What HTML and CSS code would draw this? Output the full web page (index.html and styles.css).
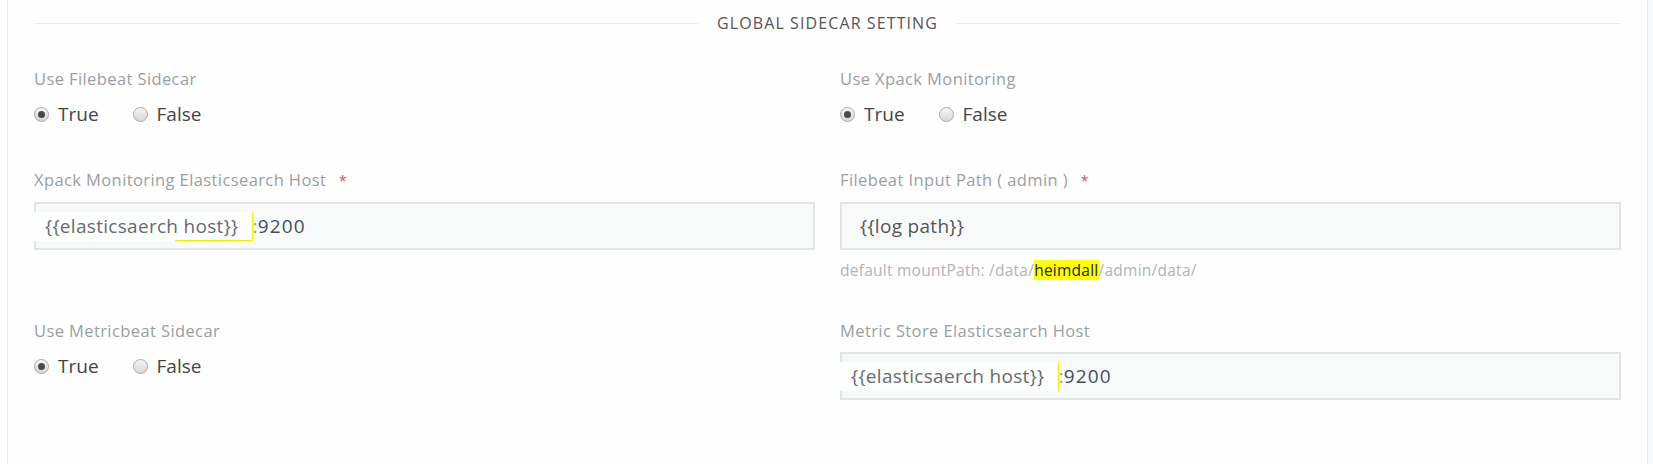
FILE: index.html
```html
<!DOCTYPE html>
<html lang="en">
<head>
<meta charset="utf-8">
<title>Global Sidecar Setting</title>
<link rel="stylesheet" href="styles.css">
</head>
<body>
<div class="page">
  <div class="card">
    <div class="section-title">
      <span class="line"></span>
      <span class="title-text">GLOBAL SIDECAR SETTING</span>
      <span class="line"></span>
    </div>
    <div class="grid">
      <div class="field">
        <div class="label">Use Filebeat Sidecar</div>
        <div class="radios">
          <label class="radio"><span class="dot checked"></span><span class="rtext">True</span></label>
          <label class="radio"><span class="dot"></span><span class="rtext">False</span></label>
        </div>
      </div>
      <div class="field">
        <div class="label">Use Xpack Monitoring</div>
        <div class="radios">
          <label class="radio"><span class="dot checked"></span><span class="rtext">True</span></label>
          <label class="radio"><span class="dot"></span><span class="rtext">False</span></label>
        </div>
      </div>

      <div class="field">
        <div class="label">Xpack Monitoring Elasticsearch Host <span class="req">*</span></div>
        <div class="input tag-input">
          <span class="tag underline">{{elasticsaerch host}}</span><span class="colon">:</span><span class="port">9200</span>
        </div>
      </div>
      <div class="field">
        <div class="label">Filebeat Input Path ( admin ) <span class="req">*</span></div>
        <div class="input plain-input">{{log path}}</div>
        <div class="help">default mountPath: /data/<mark class="hl">heimdall</mark>/admin/data/</div>
      </div>

      <div class="field row-last">
        <div class="label">Use Metricbeat Sidecar</div>
        <div class="radios">
          <label class="radio"><span class="dot checked"></span><span class="rtext">True</span></label>
          <label class="radio"><span class="dot"></span><span class="rtext">False</span></label>
        </div>
      </div>
      <div class="field row-last">
        <div class="label">Metric Store Elasticsearch Host</div>
        <div class="input tag-input">
          <span class="tag">{{elasticsaerch host}}</span><span class="colon">:</span><span class="port">9200</span>
        </div>
      </div>
    </div>
  </div>
  <div class="gutter"></div>
</div>
</body>
</html>
```

FILE: styles.css
```css
html, body {
  margin: 0;
  padding: 0;
  background: #ffffff;
}

body {
  font-family: "Open Sans", "Liberation Sans", sans-serif;
  color: #555;
}

.page {
  display: flex;
  height: 464px;
  padding-left: 7px;
  box-sizing: border-box;
  overflow: hidden;
}

.card {
  flex: 1;
  border-left: 1px solid #ececec;
  border-right: 1px solid #e8ecee;
  padding: 11px 26px 0 26px;
  box-sizing: border-box;
  background: #fefefe;
}

.gutter {
  width: 5px;
  background: #f6f8f9;
}

.section-title {
  display: flex;
  align-items: center;
  height: 24px;
}

.section-title .line {
  flex: 1;
  height: 1px;
  background: #ebebeb;
}

.title-text {
  padding: 0 19px;
  font-size: 16px;
  letter-spacing: 1.1px;
  color: #555;
  line-height: 24px;
}

.grid {
  display: grid;
  grid-template-columns: 1fr 1fr;
  column-gap: 25px;
  row-gap: 40px;
  margin-top: 32px;
}

.row-last {
  margin-top: -1px;
}

.label {
  font-size: 16.5px;
  letter-spacing: 0.4px;
  line-height: 24px;
  color: #9a9ea3;
  margin-bottom: 9px;
}

.req {
  color: #f04747;
  margin-left: 8px;
  font-size: 14px;
}

.radios {
  display: flex;
  align-items: center;
  height: 28px;
}

.radio {
  display: flex;
  align-items: center;
  margin-right: 34px;
}

.dot {
  width: 15px;
  height: 15px;
  box-sizing: border-box;
  border-radius: 50%;
  border: 1px solid #a9a9a9;
  background: linear-gradient(#f6f6f6, #d6d6d6);
  display: flex;
  align-items: center;
  justify-content: center;
  margin-right: 9px;
}

.dot.checked::after {
  content: "";
  width: 7px;
  height: 7px;
  border-radius: 50%;
  background: #4a4a4a;
}

.rtext {
  font-size: 19px;
  color: #444;
  line-height: 28px;
}

.input {
  height: 48px;
  box-sizing: border-box;
  border: 2px solid #e0e6e8;
  background: #f8fafa;
  display: flex;
  align-items: center;
  font-size: 19px;
  letter-spacing: 0.3px;
}

.plain-input {
  padding-left: 18px;
  color: #555;
}

.tag {
  position: relative;
  display: flex;
  align-items: center;
  height: 29px;
  margin-left: -6px;
  padding: 0 13px 0 15px;
  background: #fdfefe;
  border-right: 1px solid #f0f000;
  color: #6a6a6a;
}

.tag.underline::after {
  content: "";
  position: absolute;
  right: 0;
  bottom: 0;
  width: 77px;
  height: 1px;
  background: #f0f000;
}

.colon {
  color: #999;
}

.port {
  color: #3d4f63;
  letter-spacing: 1.1px;
}

.help {
  margin-top: 10px;
  font-size: 15.5px;
  letter-spacing: 0.25px;
  line-height: 20px;
  color: #b3b3b3;
}

.hl {
  display: inline-block;
  background: #ffff00;
  color: #222;
  padding: 0;
  line-height: 20px;
}
```
